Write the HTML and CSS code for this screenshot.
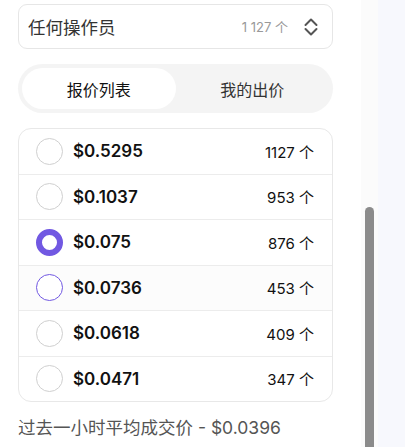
FILE: index.html
```html
<!DOCTYPE html>
<html lang="zh-CN">
<head>
    <meta charset="UTF-8">
    <meta name="viewport" content="width=device-width, initial-scale=1.0">
    <title>报价列表</title>
    <link rel="stylesheet" href="styles.css">
</head>
<body>
    <div class="page">
        <div class="panel">
            <div class="select">
                <span class="select-label">任何操作员</span>
                <span class="select-count">1 127 个</span>
                <svg class="select-arrows" width="14" height="20" viewBox="0 0 14 20">
                    <path d="M1.5 8 L7 2.5 L12.5 8" fill="none" stroke="#555" stroke-width="2" stroke-linecap="round" stroke-linejoin="round"/>
                    <path d="M1.5 12 L7 17.5 L12.5 12" fill="none" stroke="#555" stroke-width="2" stroke-linecap="round" stroke-linejoin="round"/>
                </svg>
            </div>

            <div class="tabs">
                <button class="tab active">报价列表</button>
                <button class="tab">我的出价</button>
            </div>

            <ul class="offers">
                <li class="offer">
                    <span class="radio"></span>
                    <span class="price">$0.5295</span>
                    <span class="qty">1127 个</span>
                </li>
                <li class="offer">
                    <span class="radio"></span>
                    <span class="price">$0.1037</span>
                    <span class="qty">953 个</span>
                </li>
                <li class="offer">
                    <span class="radio checked"></span>
                    <span class="price">$0.075</span>
                    <span class="qty">876 个</span>
                </li>
                <li class="offer hover">
                    <span class="radio focus"></span>
                    <span class="price">$0.0736</span>
                    <span class="qty">453 个</span>
                </li>
                <li class="offer">
                    <span class="radio"></span>
                    <span class="price">$0.0618</span>
                    <span class="qty">409 个</span>
                </li>
                <li class="offer">
                    <span class="radio"></span>
                    <span class="price">$0.0471</span>
                    <span class="qty">347 个</span>
                </li>
            </ul>

            <p class="average">过去一小时平均成交价 - $0.0396</p>
        </div>

        <div class="scrollbar">
            <div class="thumb"></div>
        </div>

        <div class="side"></div>
    </div>
</body>
</html>
```

FILE: styles.css
```css
body {
    font-family: 'Inter', 'Noto Sans CJK SC', sans-serif;
    background-color: #ffffff;
    margin: 0;
    height: 447px;
    overflow: hidden;
}
.page {
    display: flex;
    height: 447px;
}
.panel {
    width: 315px;
    padding: 4px 28px 0 18px;
    box-sizing: content-box;
}
.select {
    display: flex;
    align-items: center;
    height: 45px;
    box-sizing: border-box;
    border: 1px solid #e6e6e6;
    border-radius: 9px;
    padding: 0 14px 0 9px;
}
.select-label {
    font-size: 17.5px;
    color: #333;
    flex: 1;
}
.select-count {
    font-size: 13px;
    color: #999;
    margin-right: 16px;
}
.select-arrows {
    display: block;
}
.tabs {
    display: flex;
    margin-top: 15px;
    height: 49px;
    padding: 4px;
    box-sizing: border-box;
    background-color: #f4f4f4;
    border-radius: 25px;
}
.tab {
    flex: 1;
    border: none;
    background: none;
    border-radius: 21px;
    font-family: inherit;
    font-size: 16px;
    color: #333;
    padding: 0;
    margin: 0;
}
.tab.active {
    background-color: #ffffff;
    color: #111;
}
.offers {
    list-style: none;
    margin: 15px 0 0;
    padding: 0;
    border: 1px solid #e8e8e8;
    border-radius: 13px;
    overflow: hidden;
}
.offer {
    display: flex;
    align-items: center;
    height: 45.5px;
    box-sizing: border-box;
    padding: 0 18px 0 17px;
    border-top: 1px solid #ececec;
}
.offer:first-child {
    border-top: none;
    height: 44.5px;
}
.offer.hover {
    background-color: #fcfcfc;
}
.radio {
    width: 27px;
    height: 27px;
    box-sizing: border-box;
    border: 1px solid #cfcfcf;
    border-radius: 50%;
    background-color: #fff;
    margin-right: 10px;
}
.radio.checked {
    border: 6px solid #7158e2;
}
.radio.focus {
    border-color: #7158e2;
}
.price {
    flex: 1;
    font-size: 17px;
    font-weight: 600;
    color: #111;
}
.qty {
    font-size: 15px;
    color: #111;
}
.average {
    margin: 15px 0 0;
    font-size: 17.5px;
    line-height: 22px;
    color: #555;
}
.scrollbar {
    width: 17px;
    background-color: #fbfbfb;
    display: flex;
    flex-direction: column;
    justify-content: flex-end;
    align-items: center;
}
.thumb {
    width: 9px;
    height: 240px;
    background-color: #8b8b8b;
    border-radius: 5px 5px 0 0;
}
.side {
    flex: 1;
    background-color: #f7f8fd;
}
```
